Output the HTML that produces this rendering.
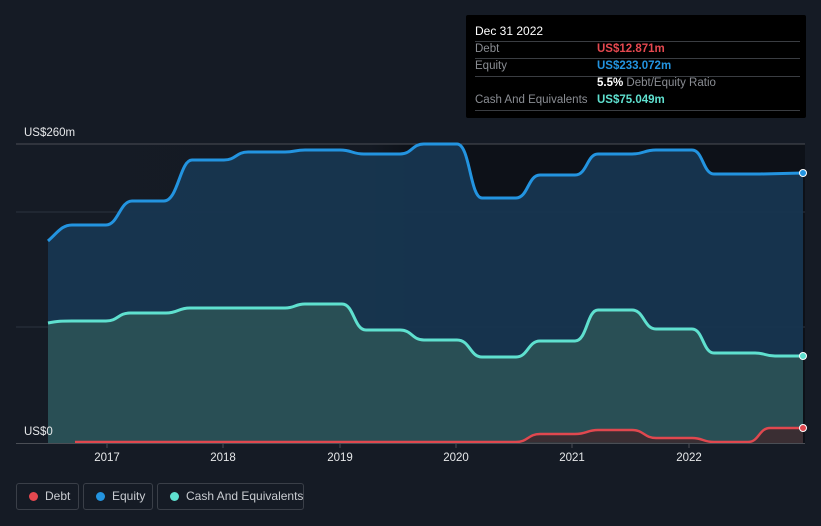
<!DOCTYPE html>
<html style="width:821px;height:526px;overflow:hidden"><head><meta charset="utf-8"><style>
body{margin:0;width:821px;height:526px;background:#151b25;font-family:"Liberation Sans",sans-serif;overflow:hidden;position:relative}
.tt{position:absolute;left:466px;top:15px;width:340px;height:103px;background:#000;border-radius:2px;font-size:11.5px}
.tt .r{position:absolute;left:9px;right:6px;border-bottom:1px solid #3a3d42;height:17px;color:#8a8d93;white-space:nowrap}
.leg{position:absolute;top:483px;height:27px;border:1px solid #3a3f48;border-radius:3px;color:#c9ccd1;font-size:12px;line-height:25px;box-sizing:border-box;white-space:nowrap}
.leg i{position:absolute;left:12px;top:8px;width:9px;height:9px;border-radius:50%}
</style></head><body>
<svg width="821" height="526" style="position:absolute;left:0;top:0">
<defs><linearGradient id="bg" x1="0" x2="1"><stop offset="0" stop-color="#151b25" stop-opacity="0"/><stop offset="0.45" stop-color="#0d1118" stop-opacity="0.2"/><stop offset="0.5" stop-color="#0d1118"/><stop offset="1" stop-color="#0d1118"/></linearGradient></defs>
<rect x="16" y="144" width="789" height="299" fill="url(#bg)"/>
<line x1="16" y1="144" x2="805" y2="144" stroke="#4a4e55"/>
<line x1="16" y1="212" x2="805" y2="212" stroke="#2a3340"/>
<line x1="16" y1="327" x2="805" y2="327" stroke="#2a3340"/>
<path d="M48,241 C58,232 62,225 72,225 L106,225 C118,225 120,201 132,201 L164,201 C178,201 180,160 192,160 L224,160 C236,160 236,152 248,152 L285,152 C295,152 295,150 305,150 L340,150 C352,150 352,154 364,154 L400,154 C412,154 412,144 424,144 L457,144 C470,144 470,198 482,198 L516,198 C528,198 528,175 540,175 L575,175 C587,175 587,154 598,154 L632,154 C644,154 644,150 656,150 L692,150 C703,150 703,174 714,174 L760,174 L803,173 L803,443 L48,443Z" fill="#173650" opacity="0.95"/>
<path d="M48,323 C58,321 62,321 72,321 L106,321 C118,321 118,313 130,313 L166,313 C178,313 178,308 190,308 L285,308 C295,308 295,304 305,304 L342,304 C354,304 354,330 366,330 L400,330 C412,330 412,340 424,340 L457,340 C470,340 470,357 482,357 L516,357 C528,357 528,341 540,341 L575,341 C587,341 587,310 598,310 L632,310 C644,310 644,329 656,329 L692,329 C703,329 703,353 714,353 L755,353 C765,353 765,356 775,356 L803,356 L803,443 L48,443Z" fill="#2b5256" opacity="0.9"/>
<path d="M48,241 C58,232 62,225 72,225 L106,225 C118,225 120,201 132,201 L164,201 C178,201 180,160 192,160 L224,160 C236,160 236,152 248,152 L285,152 C295,152 295,150 305,150 L340,150 C352,150 352,154 364,154 L400,154 C412,154 412,144 424,144 L457,144 C470,144 470,198 482,198 L516,198 C528,198 528,175 540,175 L575,175 C587,175 587,154 598,154 L632,154 C644,154 644,150 656,150 L692,150 C703,150 703,174 714,174 L760,174 L803,173" fill="none" stroke="#2394e0" stroke-width="3"/>
<path d="M48,323 C58,321 62,321 72,321 L106,321 C118,321 118,313 130,313 L166,313 C178,313 178,308 190,308 L285,308 C295,308 295,304 305,304 L342,304 C354,304 354,330 366,330 L400,330 C412,330 412,340 424,340 L457,340 C470,340 470,357 482,357 L516,357 C528,357 528,341 540,341 L575,341 C587,341 587,310 598,310 L632,310 C644,310 644,329 656,329 L692,329 C703,329 703,353 714,353 L755,353 C765,353 765,356 775,356 L803,356" fill="none" stroke="#5fe0cf" stroke-width="3"/>
<path d="M75,442 L516,442 C528,442 528,434 540,434 L575,434 C587,434 587,430 598,430 L632,430 C644,430 644,438 656,438 L692,438 C703,438 703,442 714,442 L748,442 C759,442 759,428 770,428 L803,428 L803,443 L748,443Z" fill="#3a2e33"/>
<path d="M75,442 L516,442 C528,442 528,434 540,434 L575,434 C587,434 587,430 598,430 L632,430 C644,430 644,438 656,438 L692,438 C703,438 703,442 714,442 L748,442 C759,442 759,428 770,428 L803,428" fill="none" stroke="#e0484f" stroke-width="2.5"/>
<line x1="16" y1="443.5" x2="805" y2="443.5" stroke="#4a4e55"/>
<g stroke="#4a4e55"><line x1="107" y1="444" x2="107" y2="448"/><line x1="223" y1="444" x2="223" y2="448"/><line x1="340" y1="444" x2="340" y2="448"/><line x1="456" y1="444" x2="456" y2="448"/><line x1="572" y1="444" x2="572" y2="448"/><line x1="689" y1="444" x2="689" y2="448"/></g>
<circle cx="803" cy="173" r="3.5" fill="#2394e0" stroke="#fff" stroke-width="1"/>
<circle cx="803" cy="356" r="3.5" fill="#5fe0cf" stroke="#fff" stroke-width="1"/>
<circle cx="803" cy="428" r="3.5" fill="#e0484f" stroke="#fff" stroke-width="1"/>
<g fill="#e6e8ea" font-size="11.5" font-family="Liberation Sans" text-anchor="middle">
<text x="107" y="461">2017</text><text x="223" y="461">2018</text><text x="340" y="461">2019</text><text x="456" y="461">2020</text><text x="572" y="461">2021</text><text x="689" y="461">2022</text>
<text x="24" y="136" text-anchor="start">US$260m</text><text x="24" y="435" text-anchor="start">US$0</text>
</g>
</svg>
<div class="tt">
<div style="position:absolute;left:9px;top:9px;color:#fff;font-size:12px">Dec 31 2022</div>
<div class="r" style="top:26px;border-top:1px solid #3a3d42;height:16px"></div>
<div class="r" style="top:27px;border:none;line-height:15px">Debt<span style="position:absolute;left:122px;color:#e5484f;font-weight:bold">US$12.871m</span></div>
<div class="r" style="top:44px;line-height:15px">Equity<span style="position:absolute;left:122px;color:#2394e0;font-weight:bold">US$233.072m</span></div>
<div style="position:absolute;left:131px;top:62px;color:#8a8d93;white-space:nowrap"><b style="color:#fff">5.5%</b> Debt/Equity Ratio</div>
<div class="r" style="top:78px;line-height:15px">Cash And Equivalents<span style="position:absolute;left:122px;color:#5fe0cf;font-weight:bold">US$75.049m</span></div>
</div>
<div class="leg" style="left:16px;width:63px"><i style="background:#e5484f"></i><span style="margin-left:28px">Debt</span></div>
<div class="leg" style="left:83px;width:70px"><i style="background:#2394e0"></i><span style="margin-left:28px">Equity</span></div>
<div class="leg" style="left:157px;width:147px"><i style="background:#5fe0cf"></i><span style="margin-left:28px">Cash And Equivalents</span></div>
</body></html>
